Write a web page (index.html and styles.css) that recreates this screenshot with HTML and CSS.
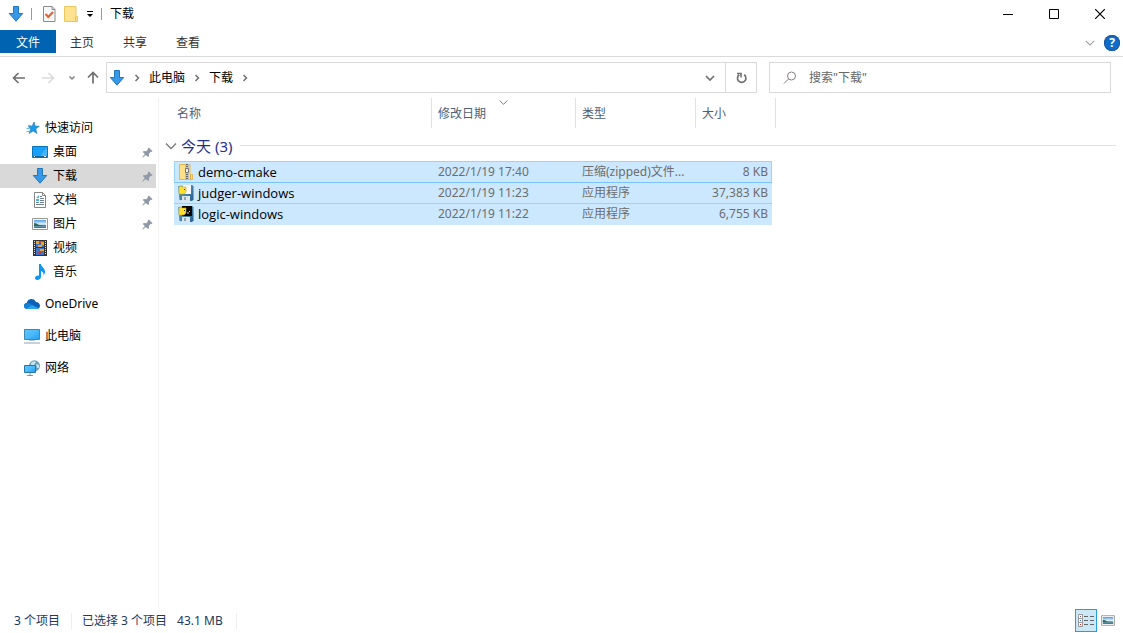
FILE: index.html
```html
<!DOCTYPE html>
<html lang="zh-CN">
<head>
<meta charset="utf-8">
<meta name="viewport" content="width=device-width, initial-scale=1">
<title>下载</title>
<link rel="stylesheet" href="styles.css">
</head>
<body>
<svg class="defs" aria-hidden="true">
  <defs>
    <linearGradient id="blue" x1="0" y1="0" x2="1" y2="1"><stop offset="0" stop-color="#5cc8ff"/><stop offset=".5" stop-color="#4bb9fb"/><stop offset="1" stop-color="#1e9df0"/></linearGradient>
    <linearGradient id="sky" x1="0" y1="0" x2="0" y2="1"><stop offset="0" stop-color="#4a9be6"/><stop offset=".5" stop-color="#e3f3f8"/><stop offset=".75" stop-color="#6fa3b5"/><stop offset="1" stop-color="#2d69ac"/></linearGradient>
    <linearGradient id="disk" x1="0" y1="0" x2="1" y2="1"><stop offset="0" stop-color="#6aa7c6"/><stop offset="1" stop-color="#24608c"/></linearGradient>
    <symbol id="download" viewBox="0 0 16 16"><path d="M5.500.5h5v7h4.200L8 15.200 1.300 7.500h4.200z" fill="#3898e8" stroke="#2077bd"/></symbol>
    <symbol id="pin" viewBox="0 0 12 12"><path d="M7.500.5l4 4-1.200 1-.8-.2-2 2.200.1 2.500-1 1-2.400-2.400L1 11.500l-.6-.6 2.700-3.300L.9 5.400l1-1 2.700.1 2-2-.2-.9z" fill="#8d9aa5"/></symbol>
    <symbol id="picture" viewBox="0 0 16 12"><path d="M.5.5h15v11H.5z" fill="#fff" stroke="#979797"/><path d="M2 2h12v8H2z" fill="url(#sky)"/><path d="M2 5q3 0 5 2l7 .500V8H2z" fill="#356b55"/></symbol>
    <symbol id="chev" viewBox="0 0 12 12"><path d="M1 3.500l5 5 5-5" fill="none" stroke="currentColor" stroke-width="1.300"/></symbol>
    <symbol id="crumb" viewBox="0 0 8 8"><path d="M2.500 1l3 3-3 3" fill="none" stroke="#707070" stroke-width="1.500"/></symbol>
  </defs>
</svg>
<div class="window">
  <header class="titlebar">
    <svg class="i16"><use href="#download"/></svg>
    <span class="bar first"></span>
    <button class="quick" aria-label="属性"><svg width="14" height="16" viewBox="0 0 14 16"><path d="M1.500.5h8.500l3 3v12H1.500z" fill="#f6f8fa" stroke="#8a8a8a"/><path d="M10 .5v3h3" fill="none" stroke="#8a8a8a"/><path d="M3.500 8l2.800 3L11 6" fill="none" stroke="#e3602e" stroke-width="2"/></svg></button>
    <button class="quick folder" aria-label="新建文件夹"><svg width="14" height="16" viewBox="0 0 14 16"><path d="M1 .5h11v10h1.500v5H.5V.5z" fill="#ffe391" stroke="#ecc75e"/><path d="M11.500 10.500v5" stroke="#e5bc4d"/></svg></button>
    <button class="quick more" aria-label="自定义快速访问工具栏"><svg width="8" height="7" viewBox="0 0 8 7"><path d="M1 0h6v1H1zM1 3h6L4 6z" fill="#000"/></svg></button>
    <span class="bar"></span>
    <h1 class="title">下载</h1>
    <div class="controls">
      <button aria-label="最小化"><svg width="10" height="10"><path d="M0 5.500h10" stroke="#000"/></svg></button>
      <button aria-label="最大化"><svg width="10" height="10"><path d="M.5.5h9v9h-9z" fill="none" stroke="#000"/></svg></button>
      <button aria-label="关闭"><svg width="10" height="10"><path d="M0 0l10 10M10 0L0 10" stroke="#000" stroke-width="1.200"/></svg></button>
    </div>
  </header>
  <nav class="ribbon" aria-label="功能区">
    <button class="tab file">文件</button>
    <button class="tab">主页</button>
    <button class="tab">共享</button>
    <button class="tab">查看</button>
    <div class="ribbon-end">
      <button aria-label="展开功能区"><svg class="i10 pale"><use href="#chev"/></svg></button>
      <button class="help" aria-label="帮助">?</button>
    </div>
  </nav>
  <div class="address-row">
    <div class="history">
      <button aria-label="后退"><svg width="13" height="12" viewBox="0 0 13 12"><path d="M13 6H1.500M6.500 1l-5 5 5 5" fill="none" stroke="#6e6e6e" stroke-width="1.600"/></svg></button>
      <button aria-label="前进"><svg width="13" height="12" viewBox="0 0 13 12"><path d="M0 6h11.500M6.500 1l5 5-5 5" fill="none" stroke="#dadada" stroke-width="1.500"/></svg></button>
      <button class="recent" aria-label="最近浏览的位置"><svg width="8" height="8" viewBox="0 0 8 8"><path d="M1.500 2.500L4 5l2.500-2.500" fill="none" stroke="#808080" stroke-width="1.500"/></svg></button>
      <button class="up" aria-label="向上"><svg width="12" height="13" viewBox="0 0 12 13"><path d="M6 12.500V1.500M1 6.500l5-5 5 5" fill="none" stroke="#6e6e6e" stroke-width="1.700"/></svg></button>
    </div>
    <div class="address">
      <svg class="i16"><use href="#download"/></svg>
      <svg class="crumb"><use href="#crumb"/></svg>
      <button>此电脑</button>
      <svg class="crumb"><use href="#crumb"/></svg>
      <button>下载</button>
      <svg class="crumb"><use href="#crumb"/></svg>
      <button class="drop" aria-label="以前的位置"><svg width="10" height="8" viewBox="0 0 10 8"><path d="M1 2l4 4 4-4" fill="none" stroke="#707070" stroke-width="1.700"/></svg></button>
      <button class="refresh" aria-label="刷新"><svg width="11" height="12" viewBox="0 0 11 12"><path d="M8.200 2.800a4.200 4.200 0 1 1-5 0" fill="none" stroke="#707070" stroke-width="1.700"/><path d="M1 1.500h4v4" fill="none" stroke="#707070" stroke-width="1.600"/></svg></button>
    </div>
    <div class="search">
      <svg width="14" height="14" viewBox="0 0 14 14"><circle cx="8.500" cy="5" r="4" fill="none" stroke="#8b7e86"/><path d="M5.500 8L1 12.500" stroke="#8b7e86"/></svg>
      <input type="search" aria-label="搜索下载" placeholder="搜索&quot;下载&quot;">
    </div>
  </div>
  <div class="body">
    <nav class="side" aria-label="导航窗格">
      <a href="#" class="top"><svg class="i16" viewBox="0 0 16 16"><path d="M10 2l.9 4 4.400.3-3.500 2.500 1 4.700-3.700-2.600-4 2.600 1.500-4.500-2.300-2.600 3.900-.3z" fill="#169ce8" stroke="#2c7fb6" stroke-width=".7"/><path d="M4 5.500h3M2.500 8.500h3M2.500 11.500h3" stroke="#65b8e8"/></svg>快速访问</a>
      <a href="#"><svg class="i16" viewBox="0 0 16 16"><path d="M.5 2.500h15v11H.5z" fill="#18a0fb" stroke="#0874b8"/><path d="M15 3v9L8 12z" fill="#43b5ff"/><path d="M1 12.500h14" stroke="#0f65a3"/><path d="M2 12.500h1M12 12.500h2" stroke="#fff"/></svg>桌面<svg class="pin"><use href="#pin"/></svg></a>
      <a href="#" class="current" aria-current="page"><svg class="i16"><use href="#download"/></svg>下载<svg class="pin"><use href="#pin"/></svg></a>
      <a href="#"><svg class="i16" viewBox="0 0 16 16"><path d="M2.500.5h8l3 3v12h-11z" fill="#fff" stroke="#858585"/><path d="M10.500.5v3h3" fill="none" stroke="#858585"/><path d="M8 4.500h2M8 6.500h4M8 8.500h4M4 10.500h3M8 10.500h4M4 12.500h8" stroke="#6c7f90"/><path d="M4.500 5.500L7 3v3H4.500zM4 7h3v2H4z" fill="#45aee5"/></svg>文档<svg class="pin"><use href="#pin"/></svg></a>
      <a href="#"><svg class="i16"><use href="#picture"/></svg>图片<svg class="pin"><use href="#pin"/></svg></a>
      <a href="#"><svg class="i16" viewBox="0 0 16 16"><path d="M1 0h14v16H1z" fill="#343434"/><path d="M2.500 1v14M13.500 1v14" stroke="#ddd" stroke-dasharray="1 1"/><path d="M4 1h8v6H4zM4 8h8v7H4z" fill="#3e76cf"/><path d="M4 1h3v3H4zM9 2h3v3H9zM6 5h4v2H6zM8 9h4v2H8z" fill="#e7a62f"/><path d="M7 2h2v2H7zM6 12h3v2H6z" fill="#b53e48"/></svg>视频</a>
      <a href="#"><svg class="i16" viewBox="0 0 16 16"><path d="M7 0h2c0 3 4.500 4 4 8.500L11.500 12c.5-3-.5-4-2.500-5v5.500C9 14.500 7.300 16 5.300 16S3 15 3 13.800s1.800-2.500 4-2.300z" fill="#0b98f3"/></svg>音乐</a>
      <a href="#" class="root"><svg class="i16" viewBox="0 0 16 16"><path d="M3.500 13C1.500 13 0 11.800 0 10c0-1.500 1-2.600 2.600-2.900C3.500 4.500 5.200 3 7.500 3c2 0 3.600 1 4.300 2.900C14.500 6 16 7.700 16 9.700c0 2-1.500 3.300-3.500 3.300z" fill="#0a62b7"/><path d="M2.600 7.100C4.500 6.500 6 7.500 8 9l-5.600 3.800C1 12.500 0 11.500 0 10c0-1.500 1-2.600 2.600-2.900z" fill="#1480d5"/><path d="M2.400 12.800L8 9l6.800 3.300c-.6.500-1.400.7-2.300.7h-9z" fill="#27a5ee"/></svg>OneDrive</a>
      <a href="#" class="root"><svg class="i16" viewBox="0 0 16 16"><path d="M.5 1.500h15v10H.5z" fill="url(#blue)" stroke="#4188ae"/><path d="M5 12.500h6" stroke="#bac7cf"/><path d="M0 15h16" stroke="#8ba3b2"/></svg>此电脑</a>
      <a href="#" class="root"><svg class="i16" viewBox="0 0 16 16"><circle cx="10.500" cy="5.800" r="5.500" fill="#6b9fb8"/><path d="M7 3q3-3 5-1l-2 3H7zM12 4l3 1v3h-2z" fill="#c6e4ed"/><path d="M.5 5.500h11v7H.5z" fill="url(#blue)" stroke="#2676a6"/><path d="M6 13v2M3 15.500h6" stroke="#6f9cb5"/></svg>网络</a>
    </nav>
    <main class="content">
      <table class="files">
        <colgroup><col class="c-name"><col class="c-date"><col class="c-type"><col class="c-size"><col></colgroup>
        <thead>
          <tr><th scope="col">名称</th><th scope="col" class="sorted">修改日期<svg class="sort"><use href="#chev"/></svg></th><th scope="col">类型</th><th scope="col">大小</th><td class="rest"><div></div></td></tr>
        </thead>
        <tbody>
          <tr class="group"><th colspan="5" scope="rowgroup"><div><svg class="i12"><use href="#chev"/></svg><span>今天 (3)</span></div></th></tr>
          <tr class="file-row focus">
            <td class="name"><div><svg class="i16" viewBox="0 0 16 16"><path d="M1.500.5H12v10h2.500v5h-13z" fill="#ffe08a" stroke="#e6b94c"/><path d="M12.500 11v4" stroke="#dca83a"/><path d="M7 0h4v15H7z" fill="#c4c2b8"/><path d="M9 0v15" stroke="#666" stroke-width="2" stroke-dasharray="1 1"/><path d="M7.500 4.500h3v4h-3z" fill="#eee" stroke="#777"/></svg>demo-cmake</div></td>
            <td>2022/1/19 17:40</td><td>压缩(zipped)文件...</td><td class="size">8 KB</td><td class="rest"></td>
          </tr>
          <tr class="file-row">
            <td class="name"><div><svg class="i16" viewBox="0 0 16 16"><path d="M0 1l14-1 1.500 1v14l-2 1-12-1z" fill="url(#disk)"/><path d="M5 0h8v9H4z" fill="#fafafa"/><path d="M4 11h8v5H4z" fill="#dce5e9"/><path d="M6 12h2v3H6z" fill="#8fa6b3"/><path d="M1 2l2-1 1 1h4v5L6 9H1z" fill="#ffe02e" stroke="#c6a715" stroke-width=".6"/><path d="M6 4h1v1H6z" fill="#333"/></svg>judger-windows</div></td>
            <td>2022/1/19 11:23</td><td>应用程序</td><td class="size">37,383 KB</td><td class="rest"></td>
          </tr>
          <tr class="file-row">
            <td class="name"><div><svg class="i16" viewBox="0 0 16 16"><path d="M0 1l14-1 1.500 1v14l-2 1-12-1z" fill="url(#disk)"/><path d="M4 0h10v10H4z" fill="#050505"/><path d="M4 11h8v5H4z" fill="#dce5e9"/><path d="M6 12h2v3H6z" fill="#8fa6b3"/><path d="M1 2l2-1 1 1h4v5L6 9H1z" fill="#ffe02e" stroke="#c6a715" stroke-width=".6"/><path d="M6 4h1v1H6z" fill="#333"/><path d="M9 7h2M11 5l1 1" stroke="#ddd"/></svg>logic-windows</div></td>
            <td>2022/1/19 11:22</td><td>应用程序</td><td class="size">6,755 KB</td><td class="rest"></td>
          </tr>
        </tbody>
      </table>
    </main>
  </div>
  <footer class="status">
    <span class="count">3 个项目</span>
    <span class="selected">已选择 3 个项目</span>
    <span class="total">43.1 MB</span>
    <div class="views">
      <button class="view active" aria-label="详细信息" aria-pressed="true"><svg width="16" height="13" viewBox="0 0 16 13"><path d="M.5.5h4v4h-4zM.5 4.500h4v4h-4zM.5 8.500h4v4h-4z" fill="#fff" stroke="#999"/><path d="M6 2.500h4M12 2.500h4M6 6.500h4M12 6.500h4M6 10.500h4M12 10.500h4" stroke="#666"/><path d="M2 2h1v1H2z" fill="#555"/><path d="M2 6h1v1H2z" fill="#36c"/><path d="M2 10h1v1H2z" fill="#c22"/></svg></button>
      <button class="view" aria-label="大缩略图"><svg width="14" height="11"><use href="#picture"/></svg></button>
    </div>
  </footer>
</div>
</body>
</html>
```

FILE: styles.css
```css
* { box-sizing: border-box; }
body {
  margin: 0;
  background: #fff;
  color: #000;
  font: 12px/16px "Noto Sans", "Noto Sans CJK SC", sans-serif;
}
button {
  border: 0;
  padding: 0;
  background: none;
  font: inherit;
  color: inherit;
}
svg { display: block; flex: none; }
.defs { position: absolute; width: 0; height: 0; }
.i16 { width: 16px; height: 16px; }
.i12 { width: 12px; height: 12px; }
.i10 { width: 10px; height: 10px; }
.pale { color: #999; }
.window { display: flex; flex-direction: column; min-height: 100vh; }

.titlebar { display: flex; align-items: center; height: 30px; padding: 0 0 2px 8px; }
.bar { width: 1px; height: 12px; background: #999; }
.bar.first { margin: 0 10px 0 7px; }
.folder { margin: 0 8px; }
.more { margin-right: 7px; }
.title { margin: 0 0 0 8px; font-size: 12px; font-weight: 400; }
.controls { display: flex; margin-left: auto; }
.controls button { display: grid; place-items: center; width: 46px; height: 28px; }

.ribbon { display: flex; height: 27px; border-bottom: 1px solid #dadbdc; }
.tab { height: 23px; padding: 2px 14px 0; margin-right: 1px; color: #333; }
.tab.file { width: 56px; margin-right: 0; background: #0063b1; color: #fff; }
.tab + .tab { width: 52px; }
.ribbon-end { display: flex; align-items: center; gap: 9px; margin-left: auto; padding-right: 3px; }
.help {
  width: 16px;
  height: 16px;
  border-radius: 50%;
  background: #0f6cc9;
  box-shadow: inset 0 0 0 1px #1c589b;
  color: #fff;
  font-weight: 700;
}

.address-row { display: flex; height: 41px; padding: 5px 12px 5px 12px; }
.history { display: flex; flex: none; align-items: center; width: 94px; }
.history button { margin-right: 17px; }
.history .recent { margin: 0 11px 0 -4px; }
.history .up { margin: 0; }
.address { display: flex; flex: 651 1 651px; align-items: center; border: 1px solid #d9d9d9; padding-left: 2px; }
.crumb { width: 8px; height: 8px; margin: 0 4px 0 8px; }
.address > button { padding-left: 4px; }
.address .drop { margin: 0 10px 0 auto; padding: 0; }
.address .refresh { display: grid; place-items: center; width: 31px; height: 29px; border-left: 1px solid #d9d9d9; padding: 0; }
.search { display: flex; flex: 342 1 342px; align-items: center; margin-left: 12px; border: 1px solid #d9d9d9; padding: 0 12px 0 13px; }
.search input { flex: 1; min-width: 0; margin-left: 12px; border: 0; padding: 0; outline: 0; background: none; font: inherit; }
.search input::placeholder { color: #666; opacity: 1; }

.body { display: flex; flex: 1; }
.side { width: 159px; border-right: 1px solid #f2f2f2; padding: 18px 2px 0 0; }
.side a {
  display: flex;
  align-items: center;
  gap: 5px;
  height: 24px;
  padding: 0 3px 0 32px;
  color: #000;
  text-decoration: none;
}
.side .top, .side .root { padding-left: 24px; }
.side .root { margin-top: 8px; }
.side .current { background: #d9d9d9; }
.pin { width: 11px; height: 11px; margin-left: auto; }
.content { flex: 1; padding: 0 7px 0 15px; }

.files { width: 100%; table-layout: fixed; border-spacing: 0; }
.c-name { width: 257px; }
.c-date { width: 144px; }
.c-type { width: 120px; }
.c-size { width: 77px; }
.files th { padding: 0; text-align: left; font-weight: 400; }
.files thead th { height: 30px; border-left: 1px solid #e2e2e2; padding: 2px 0 0 6px; color: #4c607a; }
.files thead th:first-child { border: 0; padding-left: 3px; }
.files .sorted { position: relative; }
.sort { position: absolute; top: 0; left: 50%; width: 9px; height: 9px; margin-left: -5px; color: #777; }
.files td { padding: 0; }
.files thead .rest div { height: 30px; margin-left: 3px; border-left: 1px solid #e2e2e2; }
.group div { display: flex; align-items: center; gap: 4px; height: 33px; margin-left: -9px; padding-top: 2px; color: #777; }
.group span { color: #1e3287; font-size: 15px; line-height: 20px; }
.group div::after { content: ""; flex: 1; height: 1px; margin-left: 4px; background: #e2e2e2; }
.file-row td { height: 21px; padding-left: 7px; border-bottom: 1px solid #99d1ff; background: #cce8ff; color: #6d6d6d; line-height: 16px; white-space: nowrap; }
.file-row .name { padding-left: 4px; color: #000; font-family: "Open Sans", sans-serif; font-size: 13px; }
.name div { display: flex; align-items: center; gap: 4px; }
.file-row .size { padding: 0 4px 0 0; text-align: right; }
.file-row.focus td { height: 22px; border-top: 1px solid #99d1ff; border-bottom-color: #7bc3ff; }
.file-row.focus .name { border-left: 1px solid #99d1ff; padding-left: 3px; }
.file-row.focus .size { border-right: 1px solid #99d1ff; padding-right: 3px; }
.file-row:last-child td { border-bottom-color: #cce8ff; }
.file-row .rest, .file-row.focus .rest { border: 0; background: none; }

.status { display: flex; align-items: center; height: 25px; padding-left: 14px; color: #1e395b; }
.count { width: 58px; border-right: 1px solid #eee; }
.selected { margin-left: 10px; }
.total { margin-left: 10px; padding-right: 13px; border-right: 1px solid #eee; }
.views { display: flex; margin-left: auto; padding-right: 4px; }
.view { display: grid; place-items: center; width: 22px; height: 23px; }
.view.active { border: 1px solid #26a0da; background: #cbe8f6; }
```
